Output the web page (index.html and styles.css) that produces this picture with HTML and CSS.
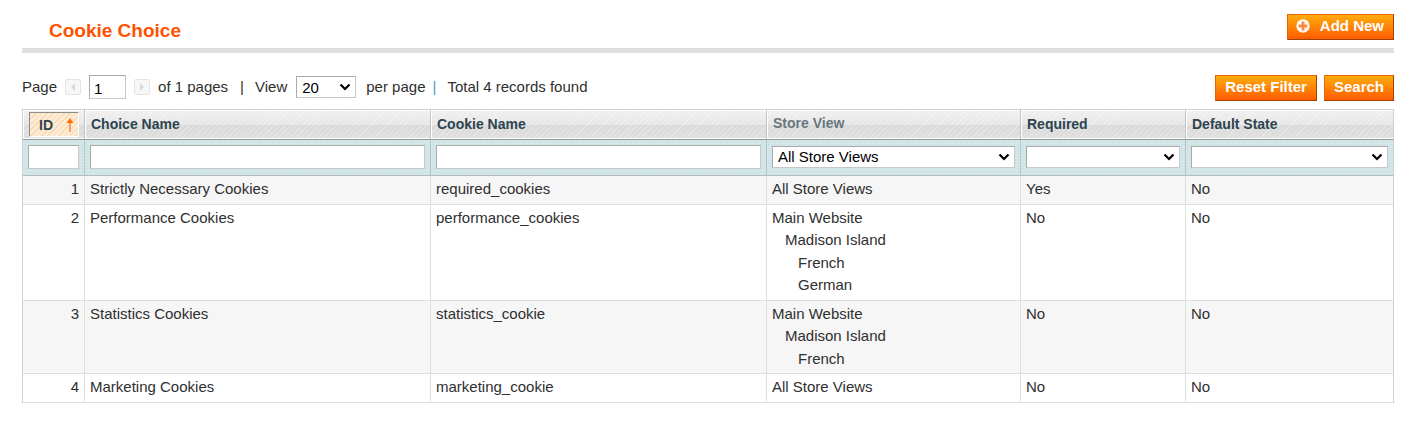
FILE: index.html
```html
<!DOCTYPE html>
<html lang="en">
<head>
<meta charset="utf-8">
<title>Cookie Choice</title>
<link rel="stylesheet" href="styles.css">
</head>
<body>
<main class="page">
  <header class="content-header">
    <h1 class="title">Cookie Choice</h1>
    <button type="button" class="btn btn-add">
      <svg class="btn-icon" viewBox="0 0 14 14" aria-hidden="true"><circle cx="7" cy="7" r="6.700" fill="#fff" fill-opacity="0.950"/><path d="M7 2.500v9M2.500 7h9" stroke="#f79a58" stroke-width="3"/><path d="M7 3.500v7M3.500 7h7" stroke="#f47d2c" stroke-width="1"/></svg>
      Add New
    </button>
  </header>

  <form class="grid">
    <div class="toolbar">
      <div class="pager">
        <label for="page">Page</label>
        <button type="button" class="arrow" aria-label="Previous page" disabled><svg viewBox="0 0 14 14"><path d="M9 3v8L5 7z"/></svg></button>
        <input id="page" class="page-input" type="text" value="1">
        <button type="button" class="arrow" aria-label="Next page" disabled><svg viewBox="0 0 14 14"><path d="M5 3v8l4-4z"/></svg></button>
        <span class="pages">of 1 pages</span>
        <span class="sep">|</span>
        <label for="limit">View</label>
        <select id="limit" class="select limit"><option>20</option></select>
        <span class="per-page">per page</span>
        <span class="sep-blue">|</span>
        <span>Total 4 records found</span>
      </div>
      <div class="actions">
        <button type="reset" class="btn">Reset Filter</button>
        <button type="button" class="btn">Search</button>
      </div>
    </div>

    <table class="data">
      <colgroup>
        <col class="col-id"><col class="col-choice"><col class="col-cookie"><col class="col-store"><col class="col-required"><col class="col-default">
      </colgroup>
      <thead>
        <tr class="headings">
          <th class="sorted"><a href="#" class="sort-active">ID <svg class="sort-arrow" viewBox="0 0 8 14" aria-hidden="true"><path d="M3 4h2v10H3z" fill="#fb9c5c"/><path d="M4 0l3.500 5h-7z" fill="#ff6a0a"/></svg></a></th>
          <th><a href="#">Choice Name</a></th>
          <th><a href="#">Cookie Name</a></th>
          <th><span class="nosort">Store View</span></th>
          <th><a href="#">Required</a></th>
          <th><a href="#">Default State</a></th>
        </tr>
        <tr class="filters">
          <td><input class="field" type="text" aria-label="ID"></td>
          <td><input class="field" type="text" aria-label="Choice Name"></td>
          <td><input class="field" type="text" aria-label="Cookie Name"></td>
          <td><select class="select" aria-label="Store View"><option>All Store Views</option></select></td>
          <td><select class="select" aria-label="Required"><option></option><option>Yes</option><option>No</option></select></td>
          <td><select class="select" aria-label="Default State"><option></option><option>Yes</option><option>No</option></select></td>
        </tr>
      </thead>
      <tbody>
        <tr><td class="num">1</td><td>Strictly Necessary Cookies</td><td>required_cookies</td><td>All Store Views</td><td>Yes</td><td>No</td></tr>
        <tr><td class="num">2</td><td>Performance Cookies</td><td>performance_cookies</td><td>Main Website<div class="store">Madison Island<div class="store">French</div><div class="store">German</div></div></td><td>No</td><td>No</td></tr>
        <tr><td class="num">3</td><td>Statistics Cookies</td><td>statistics_cookie</td><td>Main Website<div class="store">Madison Island<div class="store">French</div></div></td><td>No</td><td>No</td></tr>
        <tr><td class="num">4</td><td>Marketing Cookies</td><td>marketing_cookie</td><td>All Store Views</td><td>No</td><td>No</td></tr>
      </tbody>
    </table>
  </form>
</main>
</body>
</html>
```
FILE: styles.css
```css
* { box-sizing: border-box; }

body {
  margin: 0;
  background: #fff;
  color: #2f2f2f;
  font: 15px/1.5 "Liberation Sans", Arial, sans-serif;
}

.page { padding: 14px 24px 22px 22px; }

.content-header {
  display: flex;
  justify-content: space-between;
  align-items: flex-start;
  padding-bottom: 4px;
  border-bottom: 5px solid #dfdfdf;
}

.title {
  margin: 4px 0 0 27px;
  color: #ff5200;
  font-size: 19px;
  line-height: 26px;
}

.btn {
  display: flex;
  align-items: center;
  height: 26px;
  padding: 0 9px 2px;
  border: 1px solid;
  border-color: #ed6502 #a04300 #a04300 #ed6502;
  background: linear-gradient(#ffac0c, #ff5c00);
  color: #fff;
  font: bold 15px/20px "Liberation Sans", Arial, sans-serif;
}

.btn-add { gap: 10px; padding-left: 8px; }
.btn-icon { width: 14px; height: 14px; }

.toolbar {
  display: flex;
  justify-content: space-between;
  align-items: flex-start;
  padding: 22px 0 8px;
}

.pager { display: flex; align-items: center; height: 24px; }
.actions { display: flex; gap: 7px; }

.arrow {
  width: 16px;
  height: 16px;
  margin: 0 8px;
  padding: 0;
  border: 1px solid #e4e4e4;
  border-radius: 2px;
  background: #f7f7f7;
}
.arrow svg { display: block; width: 14px; height: 14px; fill: #d8d8d8; }

.page-input, .field, .select {
  border: 1px solid;
  border-color: #aaa #c8c8c8 #c8c8c8 #aaa;
  border-radius: 0;
  background-color: #fff;
  color: #000;
  font: 15px/20px "Liberation Sans", Arial, sans-serif;
}

.page-input { width: 37px; height: 24px; padding: 2px 4px 0; }
.pages { margin-right: 12px; }
.sep { margin-right: 11px; }
.per-page { margin: 0 7px 0 10px; }
.sep-blue { margin-right: 11px; color: #4aa0d0; }

.select {
  display: block;
  width: 100%;
  height: 22px;
  padding: 0 20px 0 5px;
  appearance: none;
  background: #fff url("data:image/svg+xml,%3Csvg xmlns='http://www.w3.org/2000/svg' width='12' height='8'%3E%3Cpath d='M1.500 1.500L6 6l4.500-4.500' fill='none' stroke='%23000' stroke-width='2.200'/%3E%3C/svg%3E") no-repeat right 4px center;
}
.limit { width: 60px; margin-left: 9px; padding-top: 1px; }

.data {
  width: 100%;
  table-layout: fixed;
  border: 1px solid #cbd3d4;
  border-width: 1px 0 0 1px;
  border-spacing: 0;
}

.col-id { width: 62px; }
.col-choice { width: 346px; }
.col-cookie { width: 336px; }
.col-store { width: 254px; }
.col-required { width: 165px; }
.col-default { width: 208px; }

.headings th {
  height: 30px;
  padding: 1px 6px 2px;
  border-right: 1px solid #c0c4c4;
  border-bottom: 1px solid #8b9898;
  background:
    repeating-linear-gradient(135deg, #ffffff40 0 1px, #ffffff00 1px 4px),
    linear-gradient(#f0f0f0, #e6e6e6 50%, #dadada 50%, #dfdfdf);
  box-shadow: inset 1px 1px #fff, inset 0 -1px #fff;
  color: #2d444f;
  font-size: 14px;
  line-height: 20px;
  text-align: left;
}
.headings a { color: inherit; text-decoration: none; }
.nosort { display: block; padding-bottom: 2px; color: #67767e; }

.headings .sorted { padding: 2px 5px 2px 6px; }
.headings .sort-active {
  display: flex;
  align-items: center;
  justify-content: space-between;
  height: 25px;
  padding: 0 4px 0 9px;
  border: 1px solid;
  border-color: #8c8c8c #fff #fff #8c8c8c;
  background: repeating-linear-gradient(135deg, #fbd9b0 0 1px, #fdebd5 1px 4px);
}
.sort-arrow { width: 8px; height: 14px; }

.filters td {
  height: 36px;
  padding: 0 5px 2px;
  border-right: 1px solid #b9c3c4;
  border-bottom: 1px solid #b2bcbd;
  background:
    repeating-linear-gradient(#ffffff20 0 1px, #ffffff00 1px 3px),
    repeating-linear-gradient(90deg, #ffffff20 0 1px, #ffffff00 1px 3px),
    #cde3e5;
  vertical-align: middle;
}
.field { display: block; width: 100%; height: 24px; padding: 0 4px; }

tbody td {
  padding: 2px 5px 3px;
  border-right: 1px solid #dadfe0;
  border-bottom: 1px solid #dadfe0;
  vertical-align: top;
}
tbody tr:nth-child(odd) { background: #f6f6f6; }
tbody td:last-child, .headings th:last-child, .filters td:last-child { border-right-color: #cbd3d4; }
.num { text-align: right; }
.store { padding-left: 13px; }
```
